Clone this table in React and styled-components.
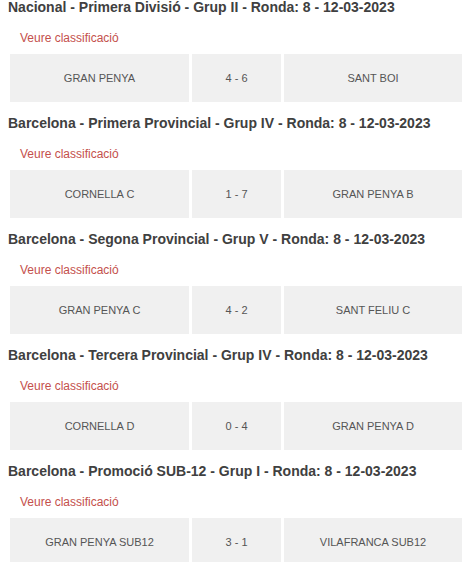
import styled, { createGlobalStyle } from "styled-components"

const GlobalStyle = createGlobalStyle`
  body {
    margin: 0;
    background: #fff;
    font-family: "Liberation Sans", Arial, sans-serif;
  }
`

const Page = styled.div`
  margin-top: -3px;
  padding-left: 8px;
`

const Section = styled.section`
  display: flex;
  flex-direction: column;
`

const Title = styled.h3`
  margin: 0;
  font-size: 14px;
  line-height: 20px;
  font-weight: bold;
  color: #404040;
`

const Link = styled.a`
  display: block;
  margin: 13px 0 8px 12px;
  font-size: 12px;
  line-height: 16px;
  color: #c4504c;
  text-decoration: none;
`

const Row = styled.div`
  display: grid;
  grid-template-columns: 179px 89px 178px;
  column-gap: 3px;
  margin: 0 0 11px 2px;
`

const Cell = styled.div`
  height: 48px;
  display: flex;
  align-items: center;
  justify-content: center;
  background: #f0f0f0;
  font-size: 11px;
  color: #555;
`

const matches = [
  { title: "Nacional - Primera Divisió - Grup II - Ronda: 8 - 12-03-2023", home: "GRAN PENYA", score: "4 - 6", away: "SANT BOI" },
  { title: "Barcelona - Primera Provincial - Grup IV - Ronda: 8 - 12-03-2023", home: "CORNELLA C", score: "1 - 7", away: "GRAN PENYA B" },
  { title: "Barcelona - Segona Provincial - Grup V - Ronda: 8 - 12-03-2023", home: "GRAN PENYA C", score: "4 - 2", away: "SANT FELIU C" },
  { title: "Barcelona - Tercera Provincial - Grup IV - Ronda: 8 - 12-03-2023", home: "CORNELLA D", score: "0 - 4", away: "GRAN PENYA D" },
  { title: "Barcelona - Promoció SUB-12 - Grup I - Ronda: 8 - 12-03-2023", home: "GRAN PENYA SUB12", score: "3 - 1", away: "VILAFRANCA SUB12" },
]

export default function App() {
  return (
    <Page>
      <GlobalStyle />
      {matches.map((m) => (
        <Section key={m.title}>
          <Title>{m.title}</Title>
          <Link href="#">Veure classificació</Link>
          <Row>
            <Cell>{m.home}</Cell>
            <Cell>{m.score}</Cell>
            <Cell>{m.away}</Cell>
          </Row>
        </Section>
      ))}
    </Page>
  )
}
